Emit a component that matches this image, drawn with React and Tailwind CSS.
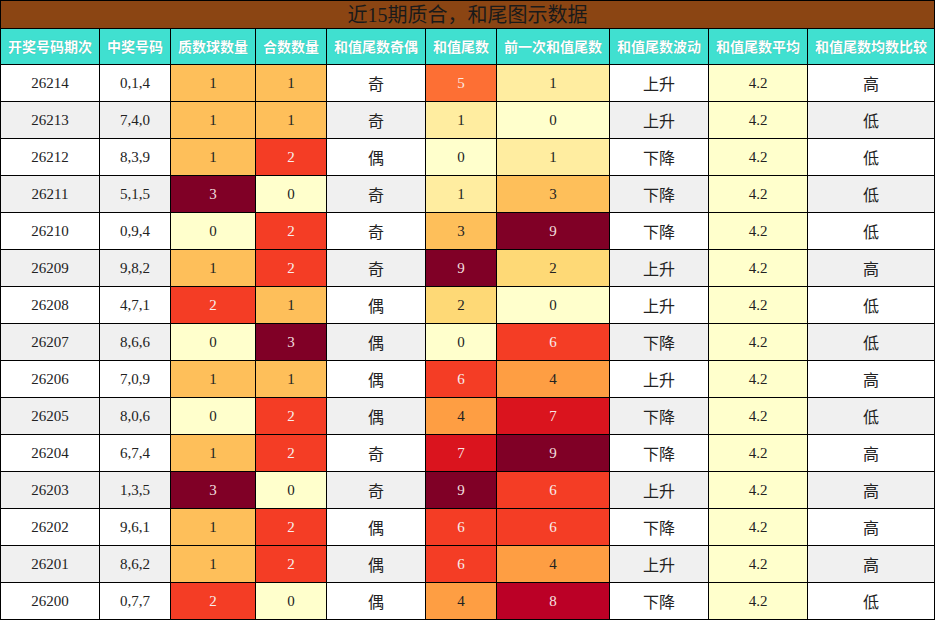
import React from "react";

const cols = "grid grid-cols-[99px_71px_85px_71px_99px_71px_113px_99px_99px_127px]";

const headers = [
  "开奖号码期次",
  "中奖号码",
  "质数球数量",
  "合数数量",
  "和值尾数奇偶",
  "和值尾数",
  "前一次和值尾数",
  "和值尾数波动",
  "和值尾数平均",
  "和值尾数均数比较",
];

// [期次, 号码, 质数, 合数, 奇偶, 尾数, 前一次, 波动, 比较]
const rows = [
  [26214, "0,1,4", 1, 1, "奇", 5, 1, "上升", "高"],
  [26213, "7,4,0", 1, 1, "奇", 1, 0, "上升", "低"],
  [26212, "8,3,9", 1, 2, "偶", 0, 1, "下降", "低"],
  [26211, "5,1,5", 3, 0, "奇", 1, 3, "下降", "低"],
  [26210, "0,9,4", 0, 2, "奇", 3, 9, "下降", "低"],
  [26209, "9,8,2", 1, 2, "奇", 9, 2, "上升", "高"],
  [26208, "4,7,1", 2, 1, "偶", 2, 0, "上升", "低"],
  [26207, "8,6,6", 0, 3, "偶", 0, 6, "下降", "低"],
  [26206, "7,0,9", 1, 1, "偶", 6, 4, "上升", "高"],
  [26205, "8,0,6", 0, 2, "偶", 4, 7, "下降", "低"],
  [26204, "6,7,4", 1, 2, "奇", 7, 9, "下降", "高"],
  [26203, "1,3,5", 3, 0, "奇", 9, 6, "上升", "高"],
  [26202, "9,6,1", 1, 2, "偶", 6, 6, "下降", "高"],
  [26201, "8,6,2", 1, 2, "偶", 6, 4, "上升", "高"],
  [26200, "0,7,7", 2, 0, "偶", 4, 8, "下降", "低"],
];

// count columns (0-3)
const countColor = {
  0: "bg-[#ffffcc] text-[#222]",
  1: "bg-[#febf5a] text-[#222]",
  2: "bg-[#f43d25] text-[#f8eeee]",
  3: "bg-[#800026] text-[#f0dede]",
};

// tail digit columns (0-9)
const tailColor = {
  0: "bg-[#ffffcc] text-[#222]",
  1: "bg-[#ffeda0] text-[#222]",
  2: "bg-[#fed976] text-[#222]",
  3: "bg-[#febf5a] text-[#222]",
  4: "bg-[#fe9e43] text-[#222]",
  5: "bg-[#fd6f34] text-[#fbe9e0]",
  6: "bg-[#f43d25] text-[#f8eeee]",
  7: "bg-[#da141e] text-[#f8e6e6]",
  8: "bg-[#bb0026] text-[#f6e2e2]",
  9: "bg-[#800026] text-[#f0dede]",
};

const Cell = ({ className = "", children }) => (
  <div className={"flex items-center justify-center border-r border-b border-black " + className}>
    {children}
  </div>
);

export default function App() {
  return (
    <div className="w-[935px] h-[620px] overflow-hidden bg-white font-['Liberation_Serif','Noto_Sans_CJK_SC',serif] text-[15px] text-[#222]">
      <div className="border-l border-t border-black">
        <div className="h-[28px] flex items-center justify-center bg-[#8b4513] border-r border-b border-black text-[20px] text-[#1a1a1a]">
          近15期质合，和尾图示数据
        </div>

        <div className={cols + " h-[36px]"}>
          {headers.map((h) => (
            <Cell
              key={h}
              className="bg-[#40e0d0] text-white font-bold text-[14px] font-['Noto_Sans_CJK_SC',sans-serif] [text-shadow:0_0_1px_rgba(0,0,0,0.25)]"
            >
              {h}
            </Cell>
          ))}
        </div>

        {rows.map((r, i) => {
          const bg = i % 2 === 1 ? "bg-[#f0f0f0]" : "bg-white";
          return (
            <div key={r[0]} className={cols + " h-[37px]"}>
              <Cell className={bg}>{r[0]}</Cell>
              <Cell className={bg}>{r[1]}</Cell>
              <Cell className={countColor[r[2]]}>{r[2]}</Cell>
              <Cell className={countColor[r[3]]}>{r[3]}</Cell>
              <Cell className={bg + " text-[16px] font-['Noto_Sans_CJK_SC',sans-serif]"}>{r[4]}</Cell>
              <Cell className={tailColor[r[5]]}>{r[5]}</Cell>
              <Cell className={tailColor[r[6]]}>{r[6]}</Cell>
              <Cell className={bg + " text-[16px] font-['Noto_Sans_CJK_SC',sans-serif]"}>{r[7]}</Cell>
              <Cell className="bg-[#ffffcc]">4.2</Cell>
              <Cell className={bg + " text-[16px] font-['Noto_Sans_CJK_SC',sans-serif]"}>{r[8]}</Cell>
            </div>
          );
        })}
      </div>
    </div>
  );
}
